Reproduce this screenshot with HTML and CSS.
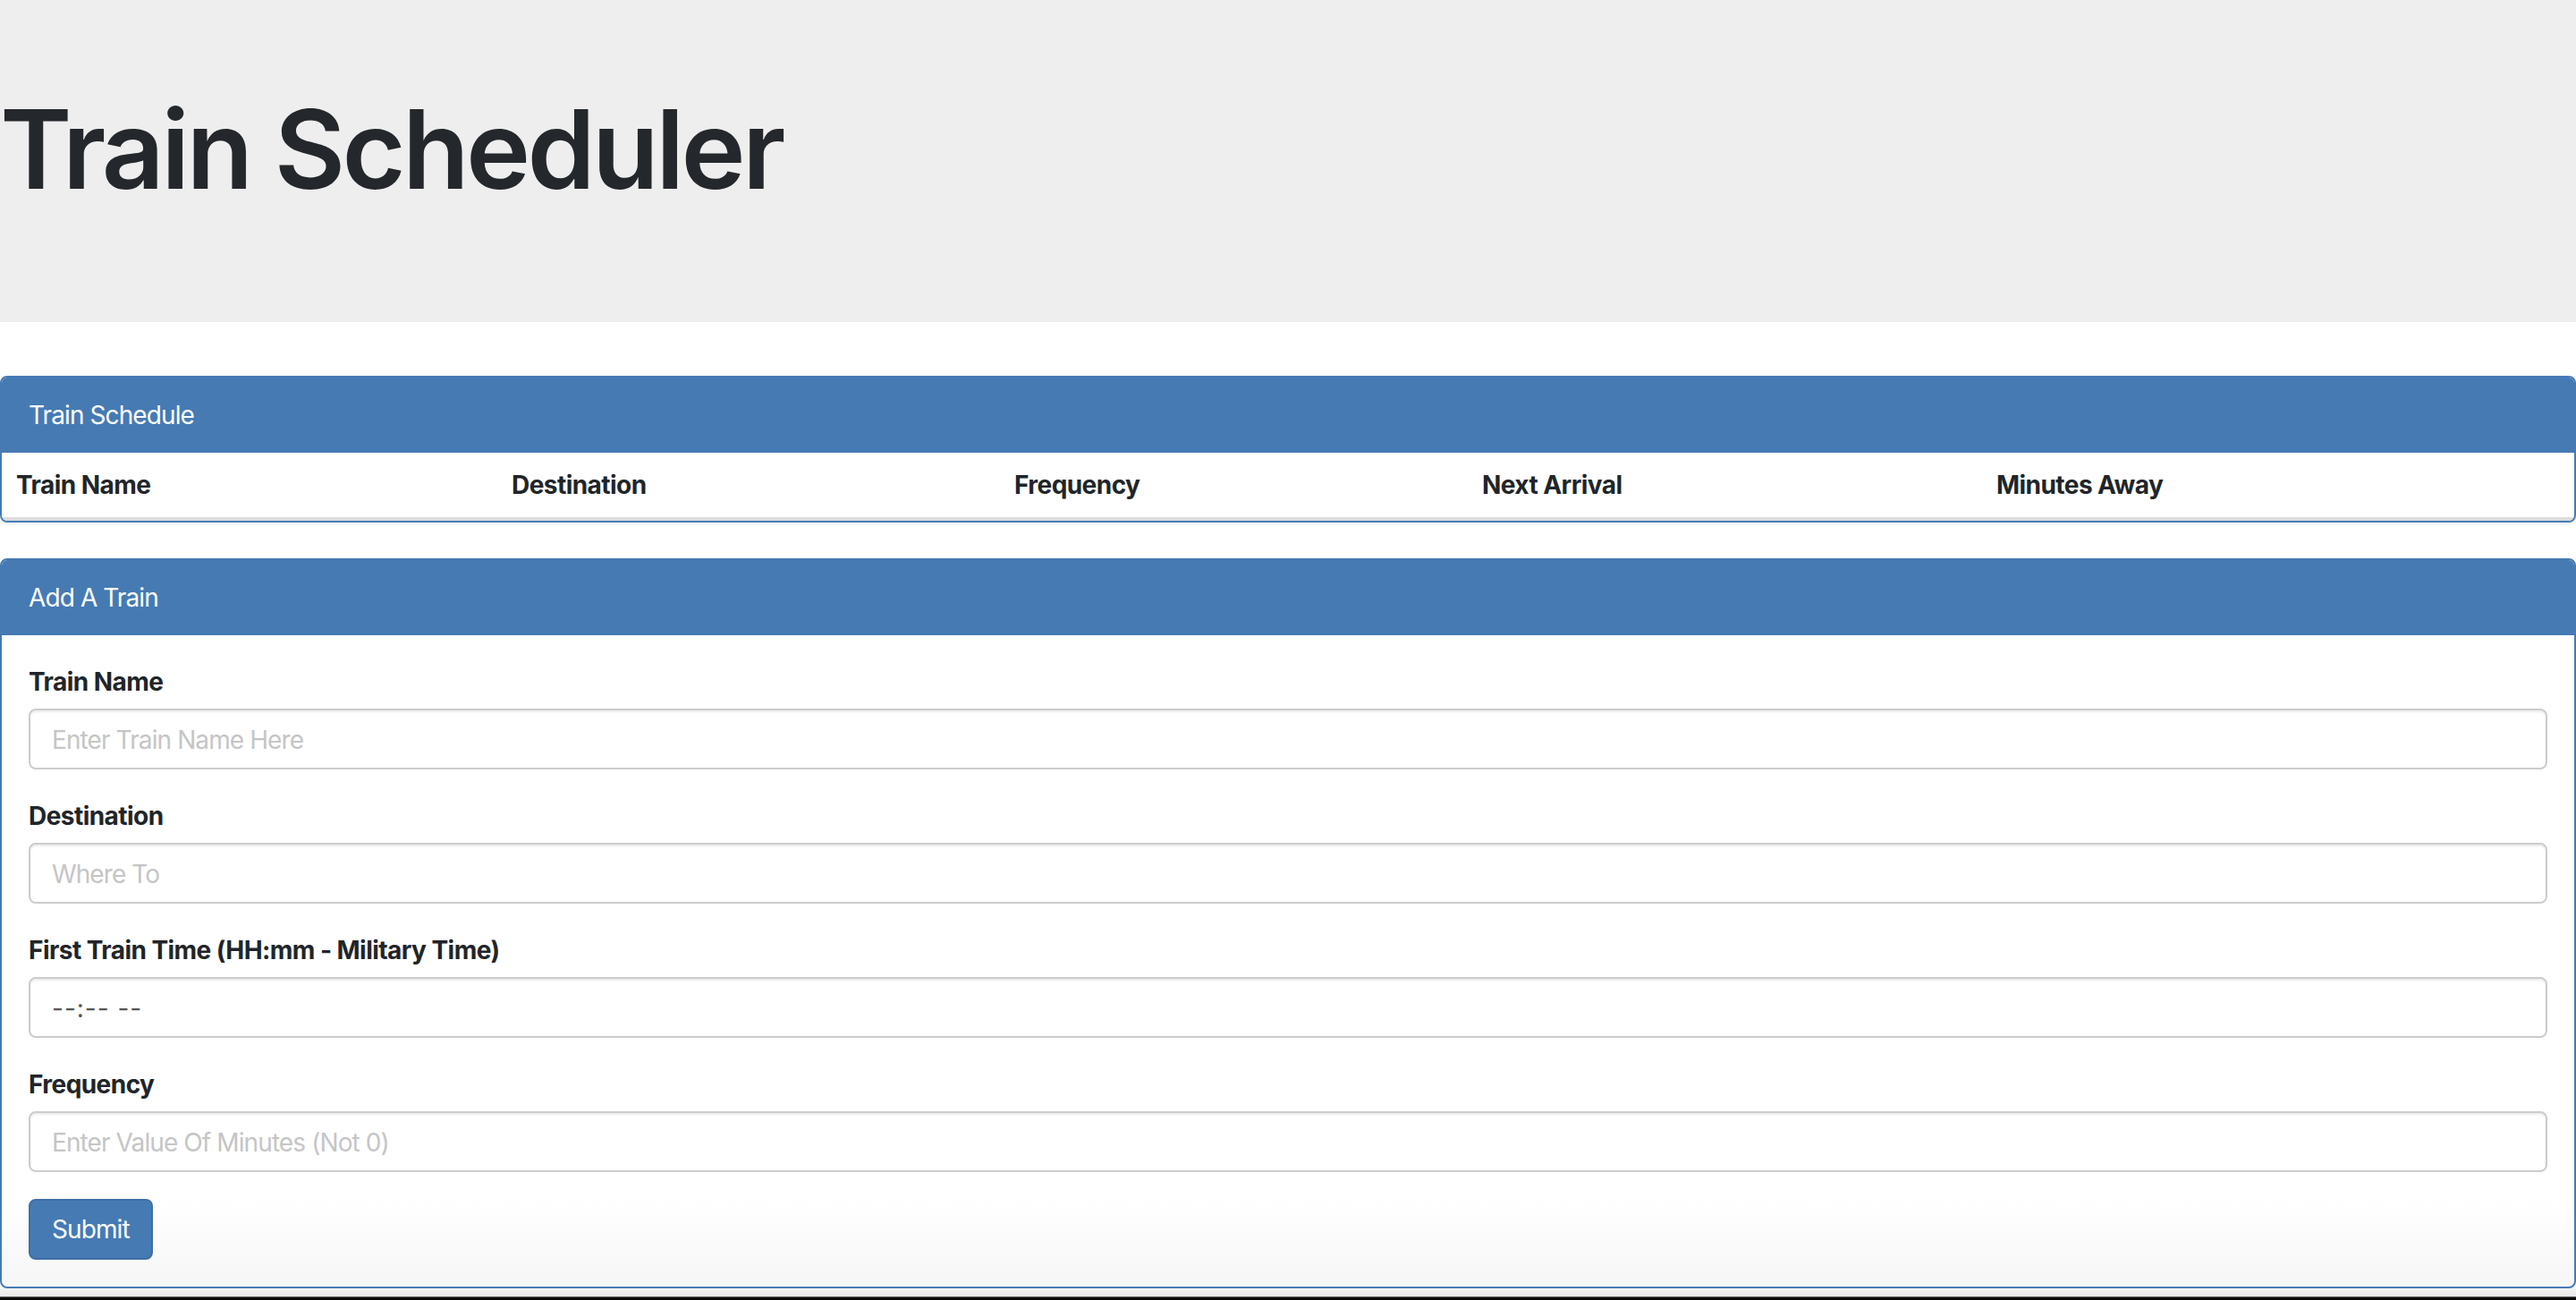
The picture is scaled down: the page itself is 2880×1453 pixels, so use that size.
FILE: index.html
```html
<!DOCTYPE html>
<html lang="en">
<head>
<meta charset="utf-8">
<title>Train Scheduler</title>
<link rel="stylesheet" href="styles.css">
</head>
<body>
<div class="jumbotron">
  <h1 class="title">Train Scheduler</h1>
</div>

<div class="panel schedule">
  <div class="panel-heading">Train Schedule</div>
  <table class="table">
    <thead>
      <tr>
        <th class="c1">Train Name</th>
        <th class="c2">Destination</th>
        <th class="c3">Frequency</th>
        <th class="c4">Next Arrival</th>
        <th class="c5">Minutes Away</th>
      </tr>
    </thead>
    <tbody></tbody>
  </table>
</div>

<div class="panel add">
  <div class="panel-heading">Add A Train</div>
  <form class="panel-body">
    <div class="form-group">
      <label class="label">Train Name</label>
      <input class="input" type="text" placeholder="Enter Train Name Here">
    </div>
    <div class="form-group">
      <label class="label">Destination</label>
      <input class="input" type="text" placeholder="Where To">
    </div>
    <div class="form-group">
      <label class="label">First Train Time (HH:mm - Military Time)</label>
      <input class="input time" type="text" placeholder="--:-- --">
    </div>
    <div class="form-group">
      <label class="label">Frequency</label>
      <input class="input" type="text" placeholder="Enter Value Of Minutes (Not 0)">
    </div>
    <button class="btn" type="button">Submit</button>
  </form>
</div>
<div class="window-edge"></div>
</body>
</html>
```

FILE: styles.css
```css
* { box-sizing: border-box; }

html, body {
  margin: 0;
  padding: 0;
  background: #ffffff;
}

body {
  font-family: Inter, "Noto Sans", "Liberation Sans", sans-serif;
  font-size: 28px;
  line-height: 42px;
  letter-spacing: -0.9px;
  color: #212529;
  overflow: hidden;
}

.jumbotron {
  background: #eeeeee;
  padding: 106px 0 132px 0;
  margin-bottom: 60px;
}

.title {
  margin: 0;
  font-size: 122px;
  line-height: 122px;
  font-weight: 600;
  letter-spacing: -3.6px;
  color: #24272b;
}

.panel {
  border: 2px solid #467ab3;
  border-radius: 8px;
  background: #ffffff;
  box-shadow: 0 2px 2px rgba(0, 0, 0, 0.05);
  margin-bottom: 40px;
  overflow: hidden;
}

.panel.add {
  margin-bottom: 0;
  background: linear-gradient(#ffffff 88%, #f6f6f6 100%);
}

.panel-heading {
  background: #467ab3;
  color: #ffffff;
  padding: 21px 30px 19px 30px;
  border-bottom: 2px solid #467ab3;
  line-height: 42px;
}

.table {
  width: 100%;
  border-collapse: collapse;
  table-layout: fixed;
}

.table th {
  text-align: left;
  font-weight: 700;
  letter-spacing: -0.55px;
  padding: 15px 16px;
  line-height: 42px;
  border-bottom: 4px solid #dddddd;
  white-space: nowrap;
}

.c1 { width: 554px; }
.c2 { width: 562px; }
.c3 { width: 523px; }
.c4 { width: 575px; }

.panel-body {
  padding: 30px;
  margin: 0;
}

.form-group {
  display: flex;
  flex-direction: column;
  margin-bottom: 30px;
}

.label {
  font-weight: 700;
  letter-spacing: -0.55px;
  line-height: 42px;
  padding-top: 1px;
  margin-bottom: 9px;
}

.input {
  display: block;
  width: 100%;
  height: 68px;
  padding: 13px 24px 11px 24px;
  font-family: inherit;
  font-size: 28px;
  line-height: 40px;
  letter-spacing: -0.9px;
  color: #555555;
  background: #ffffff;
  border: 2px solid #cccccc;
  border-radius: 8px;
  box-shadow: inset 0 2px 2px rgba(0, 0, 0, 0.075);
  outline: none;
}

.input::placeholder {
  color: #c5c5c5;
}

.input.time::placeholder {
  color: #555555;
  letter-spacing: 1px;
}

.btn {
  display: block;
  height: 68px;
  padding: 12px 24px;
  font-family: inherit;
  font-size: 28px;
  line-height: 40px;
  letter-spacing: -0.9px;
  color: #ffffff;
  background: #467ab3;
  border: 2px solid #3f6fa5;
  border-radius: 8px;
  cursor: pointer;
}

.window-edge {
  height: 13px;
  background: linear-gradient(#f3f3f3 0%, #e9e9e9 70%, #111111 75%, #000000 100%);
}
```
